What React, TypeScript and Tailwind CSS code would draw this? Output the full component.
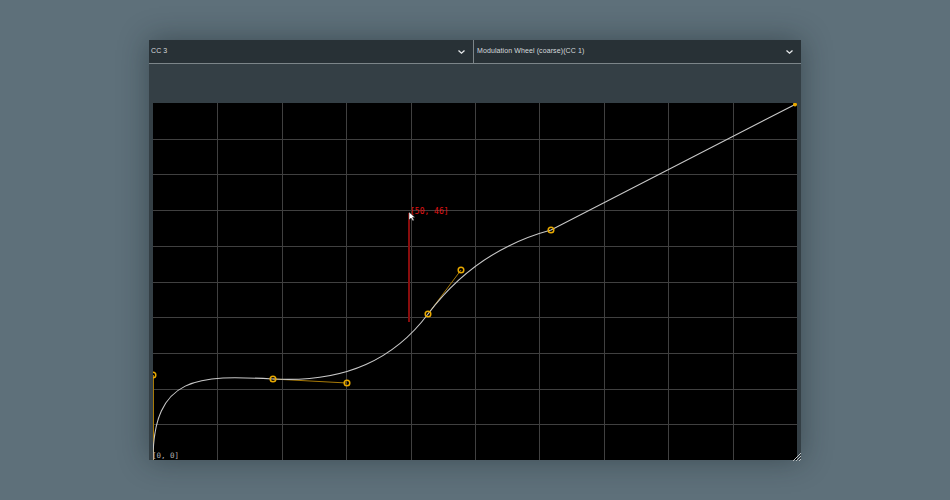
import React from 'react';

const W = 644;
const H = 357;

// canvas-local coordinates of the curve points and their handles
const points = [
  { x: 0, y: 272 },
  { x: 120, y: 276 },
  { x: 194, y: 280 },
  { x: 275, y: 211 },
  { x: 308, y: 167 },
  { x: 398, y: 127 },
  { x: 643, y: 1 },
];

function Chevron() {
  return (
    <svg width="9" height="6" viewBox="0 0 9 6" className="shrink-0">
      <path d="M1.5 1.5 L4.5 4.2 L7.5 1.5" fill="none" stroke="#e6e9eb" strokeWidth="1.3" />
    </svg>
  );
}

function Dropdown({ label, className }: { label: string; className?: string }) {
  return (
    <div className={`flex items-center justify-between pl-[2px] pr-[7px] ${className ?? ''}`}>
      <span className="text-[7px] text-[#d6dadd] tracking-[0.1px]">{label}</span>
      <Chevron />
    </div>
  );
}

function CurveCanvas() {
  const cols = Array.from({ length: 9 }, (_, i) => Math.round(((i + 1) * W) / 10) + 0.5);
  const rows = Array.from({ length: 9 }, (_, i) => Math.round(((i + 1) * H) / 10) + 0.5);
  const curve =
    'M 0 357 C 0 272, 46 272, 120 276 C 194 280, 242 255, 275 211 C 308 167, 350 140, 398 127 L 643 1';

  return (
    <div className="relative mx-[4px] h-[357px] bg-black">
      <svg width={W} height={H} viewBox={`0 0 ${W} ${H}`} className="absolute inset-0">
        {cols.map((x) => (
          <line key={`c${x}`} x1={x} y1={0} x2={x} y2={H} stroke="#404040" strokeWidth="1" />
        ))}
        {rows.map((y) => (
          <line key={`r${y}`} x1={0} y1={y} x2={W} y2={y} stroke="#404040" strokeWidth="1" />
        ))}

        {/* red marker */}
        <line x1={256} y1={110} x2={256} y2={219} stroke="#8a0d0d" strokeWidth="2" />
        <text x={257} y={111} fill="#e01414" fontSize="8" fontFamily="'DejaVu Sans Mono', monospace">
          [50, 46]
        </text>

        {/* handles */}
        <g stroke="#a87a08" strokeWidth="1">
          <line x1={0.5} y1={272} x2={0.5} y2={357} />
          <line x1={120} y1={276} x2={194} y2={280} />
          <line x1={275} y1={211} x2={308} y2={167} />
        </g>

        <path d={curve} fill="none" stroke="#c8c8c8" strokeWidth="1.1" />

        {points.map((p, i) =>
          i === points.length - 1 ? null : (
            <circle key={i} cx={p.x} cy={p.y} r={2.8} fill="none" stroke="#e8a900" strokeWidth="1.5" />
          )
        )}
        <circle cx={642} cy={1.5} r={2} fill="#e8a900" />

        {/* mouse pointer */}
        <path d="M256 109 L256 117 L258 115 L260 118 L261 117 L259.5 114.5 L262 114.5 Z" fill="#fff" stroke="#222" strokeWidth="0.5" />

        <text x={-1} y={355} fill="#b4b4b4" fontSize="7.5" fontFamily="'DejaVu Sans Mono', monospace">
          [0, 0]
        </text>
      </svg>

      {/* resize grip */}
      <svg width="9" height="9" viewBox="0 0 9 9" className="absolute right-[-4px] bottom-[-1px]">
        <g stroke="#bfc3c5" strokeWidth="1">
          <line x1="9" y1="1" x2="1" y2="9" />
          <line x1="9" y1="4" x2="4" y2="9" />
          <line x1="9" y1="7" x2="7" y2="9" />
        </g>
      </svg>
    </div>
  );
}

export default function App() {
  return (
    <div
      className="w-[950px] h-[500px] bg-[#5e707a] flex justify-center pt-[40px]"
      style={{ fontFamily: "'Liberation Sans', Arial, sans-serif" }}
    >
      <div className="w-[652px] h-[420px] bg-[#343f45] flex flex-col shadow-[0_0_28px_rgba(20,30,36,0.45)]">
        {/* Header */}
        <div className="h-[24px] flex bg-[#283136] border-b border-[#7c8589]">
          <Dropdown label="CC 3" className="w-[325px] border-r border-[#7c8589]" />
          <Dropdown label="Modulation Wheel (coarse)(CC 1)" className="flex-1 pl-[3px]" />
        </div>

        <div className="h-[39px]" />

        <CurveCanvas />
      </div>
    </div>
  );
}
